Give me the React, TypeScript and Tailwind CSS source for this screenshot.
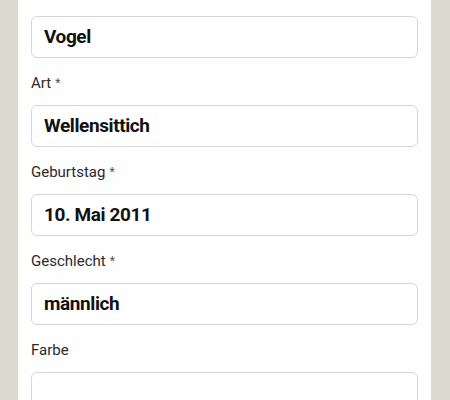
const fields = [
  { label: "Art", required: true, value: "Wellensittich" },
  { label: "Geburtstag", required: true, value: "10. Mai 2011" },
  { label: "Geschlecht", required: true, value: "männlich" },
  { label: "Farbe", required: false, value: "" },
];

const Input = ({ value }: { value: string }) => (
  <div className="h-[42px] rounded-[6px] border border-[#d6d6d4] bg-white px-[12px] flex items-center text-[19px] tracking-[-0.4px] font-bold text-[#111]">
    {value}
  </div>
);

export default function App() {
  return (
    <div
      className="h-[400px] w-[450px] overflow-hidden bg-[#dcdad0] pl-[18px] pr-[19px]"
      style={{ fontFamily: "Roboto, 'Liberation Sans', sans-serif" }}
    >
      <div className="h-full bg-[#fefefe] px-[13px] pt-[16px]">
        <Input value="Vogel" />
        {fields.map((f) => (
          <div key={f.label}>
            <div className="mt-[15px] mb-[12px] h-[20px] leading-[20px] text-[15px] text-[#2a2a2a]">
              {f.label}
              {f.required && <span className="ml-[4px] text-[12px] text-[#555] align-[1px]">*</span>}
            </div>
            <Input value={f.value} />
          </div>
        ))}
      </div>
    </div>
  );
}
